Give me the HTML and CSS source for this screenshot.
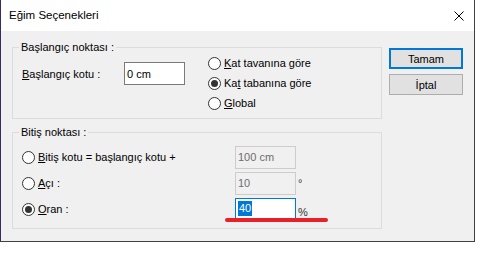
FILE: index.html
```html
<!DOCTYPE html>
<html lang="tr">
<head>
    <meta charset="UTF-8">
    <title>Eğim Seçenekleri</title>
    <link rel="stylesheet" href="styles.css">
</head>
<body>
    <div class="window">
        <!-- Title bar -->
        <div class="titlebar">
            <span class="title">Eğim Seçenekleri</span>
            <svg class="close" width="10" height="10" viewBox="0 0 10 10">
                <path d="M0.5 0.5 L9.5 9.5 M9.5 0.5 L0.5 9.5" stroke="#000" stroke-width="1" fill="none"/>
            </svg>
        </div>

        <div class="content">
            <div class="groups">
                <!-- Start point -->
                <div class="group group-start">
                    <span class="group-title">Başlangıç noktası :</span>
                    <div class="start-field">
                        <label class="start-label" for="startLevel"><u>B</u>aşlangıç kotu :</label>
                        <input class="textbox" type="text" id="startLevel" value="0 cm">
                    </div>
                    <div class="radio-list">
                        <label class="radio"><input type="radio" name="ref"><span><u>K</u>at tavanına göre</span></label>
                        <label class="radio"><input type="radio" name="ref" checked><span>Ka<u>t</u> tabanına göre</span></label>
                        <label class="radio"><input type="radio" name="ref"><span><u>G</u>lobal</span></label>
                    </div>
                </div>

                <!-- End point -->
                <div class="group group-end">
                    <span class="group-title">Bitiş noktası :</span>
                    <div class="end-row">
                        <label class="radio"><input type="radio" name="end"><span><u>B</u>itiş kotu = başlangıç kotu +</span></label>
                        <input class="textbox" type="text" value="100 cm" disabled>
                        <span class="unit"></span>
                    </div>
                    <div class="end-row">
                        <label class="radio"><input type="radio" name="end"><span><u>A</u>çı :</span></label>
                        <input class="textbox" type="text" value="10" disabled>
                        <span class="unit">°</span>
                    </div>
                    <div class="end-row">
                        <label class="radio"><input type="radio" name="end" checked><span><u>O</u>ran :</span></label>
                        <div class="textbox textbox-active"><span class="selected">40</span></div>
                        <span class="unit unit-low">%</span>
                        <div class="mark"></div>
                    </div>
                </div>
            </div>

            <div class="buttons">
                <button class="btn btn-default">Tamam</button>
                <button class="btn">İptal</button>
            </div>
        </div>
    </div>
</body>
</html>
```

FILE: styles.css
```css
* {
    margin: 0;
    padding: 0;
    box-sizing: border-box;
}

body {
    font-family: "Liberation Sans", Arial, sans-serif;
    font-size: 11px;
    color: #000;
    background-color: white;
}

.window {
    width: 475px;
    height: 242px;
    border-left: 1px solid #3a2a66;
    border-right: 1px solid #404040;
    border-bottom: 1px solid #404040;
    display: flex;
    flex-direction: column;
}

.titlebar {
    height: 31px;
    background-color: white;
    display: flex;
    align-items: center;
    justify-content: space-between;
    padding: 0 10px 0 8px;
}

.title {
    font-size: 11.5px;
    margin-top: -1px;
}

.close {
    display: block;
}

.content {
    flex-grow: 1;
    background-color: #f0f0f0;
    display: flex;
    padding: 16px 11px 0 11px;
}

.groups {
    width: 370px;
    display: flex;
    flex-direction: column;
    gap: 13px;
}

.group {
    position: relative;
    border: 1px solid #dcdcdc;
}

.group-title {
    position: absolute;
    top: -8px;
    left: 6px;
    padding: 0 2px;
    line-height: 14px;
    background-color: #f0f0f0;
}

.group-start {
    display: flex;
    height: 72px;
    padding: 5px 0 0 9px;
}

.start-field {
    display: flex;
    align-items: center;
    margin-top: 9px;
    height: 23px;
}

.start-label {
    width: 102px;
}

.textbox {
    width: 61px;
    height: 23px;
    border: 1px solid #7a7a7a;
    background-color: white;
    font-family: inherit;
    font-size: 11px;
    color: #000;
    padding: 0 2px;
    outline: none;
}

.textbox:disabled {
    border-color: #cccccc;
    background-color: #f0f0f0;
    color: #6d6d6d;
}

.radio-list {
    margin-left: 23px;
    display: flex;
    flex-direction: column;
}

.radio {
    display: flex;
    align-items: center;
    height: 20px;
    gap: 3px;
}

.radio input {
    appearance: none;
    width: 13px;
    height: 13px;
    border: 1px solid #333;
    border-radius: 50%;
    background-color: white;
    display: flex;
    align-items: center;
    justify-content: center;
}

.radio input:checked::after {
    content: "";
    width: 7px;
    height: 7px;
    border-radius: 50%;
    background-color: #333;
}

.group-end {
    height: 97px;
    padding: 11px 0 0 9px;
}

.end-row {
    position: relative;
    display: grid;
    grid-template-columns: 213px 61px auto;
    align-items: center;
    height: 26px;
}

.unit {
    padding-left: 2px;
    color: #333;
}

.unit-low {
    margin-top: 6px;
}

.textbox-active {
    border-color: #0078d7;
    display: flex;
    align-items: center;
    padding-bottom: 1px;
}

.selected {
    background-color: #0078d7;
    color: white;
    line-height: 15px;
    padding: 0 1px;
}

.mark {
    position: absolute;
    left: 203px;
    top: 22px;
    width: 103px;
    height: 4px;
    border-radius: 2px;
    background-color: #e8202a;
}

.buttons {
    display: flex;
    flex-direction: column;
    gap: 5px;
    margin-top: 1px;
    margin-left: 7px;
}

.btn {
    width: 74px;
    height: 21px;
    font-family: inherit;
    font-size: 11px;
    background-color: #e1e1e1;
    border: 1px solid #adadad;
}

.btn-default {
    border: 2px solid #0078d7;
}
```
